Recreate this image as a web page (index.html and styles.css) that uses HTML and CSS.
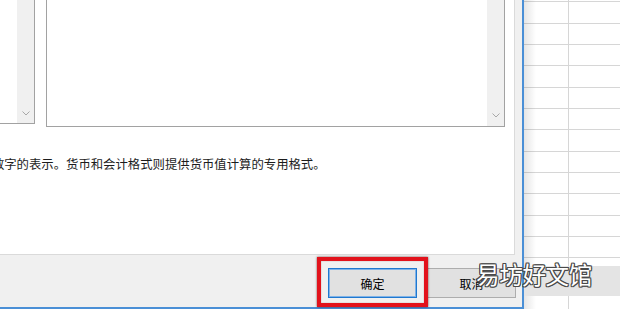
FILE: index.html
```html
<!DOCTYPE html>
<html lang="zh-CN">
  <head>
    <meta charset="UTF-8" />
    <title>设置单元格格式</title>
    <link rel="stylesheet" href="styles.css">
  </head>
  <body>
    <div class="dialog">
      <div class="panel">
        <div class="lists">
          <div class="list list-type">
            <div class="scroll">
              <svg width="8" height="5" viewBox="0 0 8 5"><polyline points="0.5,0.5 4,4 7.5,0.5" /></svg>
            </div>
          </div>
          <div class="list list-sample">
            <div class="scroll">
              <svg width="8" height="5" viewBox="0 0 8 5"><polyline points="0.5,0.5 4,4 7.5,0.5" /></svg>
            </div>
          </div>
        </div>
        <p class="desc">数值格式用于一般数字的表示。货币和会计格式则提供货币值计算的专用格式。</p>
      </div>
      <div class="footer">
        <button type="button" class="btn default">确定</button>
        <button type="button" class="btn">取消</button>
      </div>
      <!-- red highlight drawn over the OK button -->
      <div class="highlight"></div>
    </div>

    <div class="sheet">
      <div class="sheet-band"></div>
    </div>

    <div class="watermark">易坊好文馆</div>
  </body>
</html>
```

FILE: styles.css
```css
body {
  margin: 0;
  padding: 0;
  width: 620px;
  height: 309px;
  overflow: hidden;
  display: flex;
  background-color: #ffffff;
  font-family: "Noto Sans CJK SC", "Noto Sans", sans-serif;
  position: relative;
}

.dialog {
  position: relative;
  flex: none;
  width: 524px;
  height: 309px;
  box-sizing: border-box;
  background-color: #f0f0f0;
  border-right: 2px solid #4a8fd6;
  border-bottom: 2px solid #4a8fd6;
  display: flex;
  flex-direction: column;
}

.panel {
  width: 515px;
  height: 255px;
  box-sizing: border-box;
  background-color: #ffffff;
  border-right: 1px solid #dadada;
  border-bottom: 1px solid #dadada;
  overflow: hidden;
}

.lists {
  display: flex;
  align-items: flex-start;
  margin-top: -40px;
}

.list {
  box-sizing: border-box;
  border: 1px solid #a2a2a2;
  background-color: #ffffff;
  display: flex;
  justify-content: flex-end;
}

.list-type {
  width: 45px;
  height: 164px;
  margin-left: -10px;
}

.list-sample {
  width: 459px;
  height: 167px;
  margin-left: 11px;
}

.scroll {
  width: 17px;
  background-color: #f0f0f0;
  display: flex;
  align-items: flex-end;
  justify-content: center;
  padding-bottom: 7px;
  box-sizing: border-box;
}

.list-sample .scroll {
  padding-bottom: 8px;
}

.scroll svg {
  display: block;
}

.scroll polyline {
  fill: none;
  stroke: #a8a8a8;
  stroke-width: 1;
}

.desc {
  margin: 28px 0 0 -107px;
  font-size: 12.36px;
  line-height: 18px;
  color: #1c1c1c;
  white-space: nowrap;
}

.footer {
  flex: 1;
  display: flex;
  justify-content: flex-end;
  align-items: flex-start;
  gap: 10px;
  padding: 13px 6px 0 0;
}

.btn {
  width: 89px;
  height: 30px;
  margin: 0;
  padding: 0;
  box-sizing: border-box;
  background-color: #e1e1e1;
  border: 1px solid #adadad;
  font-family: "Noto Sans CJK SC", "Noto Sans", sans-serif;
  font-size: 12px;
  color: #000000;
}

.btn.default {
  border: 1px solid #1f78d0;
  box-shadow: inset 0 0 0 1px #7fb2e6;
}

.highlight {
  position: absolute;
  left: 317px;
  top: 257px;
  width: 111px;
  height: 50px;
  box-sizing: border-box;
  border: 4px solid #e2121c;
  box-shadow: 0 0 2px rgba(60, 0, 0, 0.7), inset 0 0 1px rgba(60, 0, 0, 0.6);
}

.sheet {
  flex: 1;
  background-color: #ffffff;
  background-image:
    linear-gradient(to right, rgba(0, 0, 0, 0.1), rgba(0, 0, 0, 0) 12px),
    linear-gradient(to right, transparent 44px, #d6d6d6 44px, #d6d6d6 45px, transparent 45px),
    repeating-linear-gradient(to bottom, transparent 0, transparent 20.33px, #d6d6d6 20.33px, #d6d6d6 21.33px);
  background-position: 0 0, 0 0, 0 -19px;
}

.sheet-band {
  margin-top: 266px;
  height: 30px;
  background-color: #e4e4e4;
}

.watermark {
  position: absolute;
  left: 476px;
  top: 263px;
  font-size: 23.5px;
  line-height: 1;
  letter-spacing: -0.3px;
  color: #ffffff;
  text-shadow:
    1px 0 0 #4a4a4a, -1px 0 0 #4a4a4a, 0 1px 0 #4a4a4a, 0 -1px 0 #4a4a4a,
    1px 1px 0 #4a4a4a, -1px -1px 0 #4a4a4a, 1px -1px 0 #4a4a4a, -1px 1px 0 #4a4a4a;
}
```
